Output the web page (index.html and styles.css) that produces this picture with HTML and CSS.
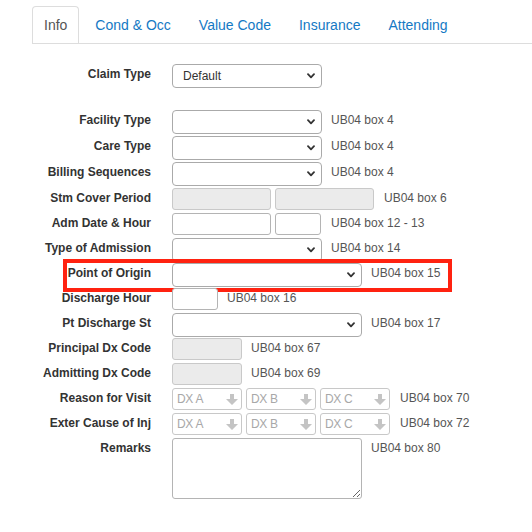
FILE: index.html
```html
<!DOCTYPE html>
<html>
<head>
<meta charset="utf-8">
<link rel="stylesheet" href="styles.css">
</head>
<body>
<ul class="tabs">
  <li class="tab active">Info</li>
  <li class="tab"><a>Cond &amp; Occ</a></li>
  <li class="tab"><a>Value Code</a></li>
  <li class="tab"><a>Insurance</a></li>
  <li class="tab"><a>Attending</a></li>
</ul>
<div class="form">
  <div class="row row-claim">
    <label class="lbl">Claim Type</label>
    <div class="sel w150"><span class="sel-text">Default</span><svg class="chev" width="8" height="6" viewBox="0 0 8 6"><path d="M1 1.2 L4 4.3 L7 1.2" /></svg></div>
  </div>
  <div class="row tall">
    <label class="lbl">Facility Type</label>
    <div class="sel w150"><span class="sel-text"></span><svg class="chev" width="8" height="6" viewBox="0 0 8 6"><path d="M1 1.2 L4 4.3 L7 1.2" /></svg></div>
    <span class="note">UB04 box 4</span>
  </div>
  <div class="row tall">
    <label class="lbl">Care Type</label>
    <div class="sel w150"><span class="sel-text"></span><svg class="chev" width="8" height="6" viewBox="0 0 8 6"><path d="M1 1.2 L4 4.3 L7 1.2" /></svg></div>
    <span class="note">UB04 box 4</span>
  </div>
  <div class="row tall">
    <label class="lbl">Billing Sequences</label>
    <div class="sel w150"><span class="sel-text"></span><svg class="chev" width="8" height="6" viewBox="0 0 8 6"><path d="M1 1.2 L4 4.3 L7 1.2" /></svg></div>
    <span class="note">UB04 box 4</span>
  </div>
  <div class="row">
    <label class="lbl">Stm Cover Period</label>
    <div class="group">
      <input class="inp w100 disabled" disabled>
      <input class="inp w100 disabled" disabled>
    </div>
    <span class="note">UB04 box 6</span>
  </div>
  <div class="row">
    <label class="lbl">Adm Date &amp; Hour</label>
    <div class="group">
      <input class="inp w100">
      <input class="inp w46">
    </div>
    <span class="note">UB04 box 12 - 13</span>
  </div>
  <div class="row">
    <label class="lbl">Type of Admission</label>
    <div class="sel w150"><span class="sel-text"></span><svg class="chev" width="8" height="6" viewBox="0 0 8 6"><path d="M1 1.2 L4 4.3 L7 1.2" /></svg></div>
    <span class="note">UB04 box 14</span>
  </div>
  <div class="row highlight">
    <label class="lbl">Point of Origin</label>
    <div class="sel w190"><span class="sel-text"></span><svg class="chev" width="8" height="6" viewBox="0 0 8 6"><path d="M1 1.2 L4 4.3 L7 1.2" /></svg></div>
    <span class="note">UB04 box 15</span>
  </div>
  <div class="row">
    <label class="lbl">Discharge Hour</label>
    <input class="inp w46">
    <span class="note">UB04 box 16</span>
  </div>
  <div class="row">
    <label class="lbl">Pt Discharge St</label>
    <div class="sel w190"><span class="sel-text"></span><svg class="chev" width="8" height="6" viewBox="0 0 8 6"><path d="M1 1.2 L4 4.3 L7 1.2" /></svg></div>
    <span class="note">UB04 box 17</span>
  </div>
  <div class="row">
    <label class="lbl">Principal Dx Code</label>
    <input class="inp w70 disabled" disabled>
    <span class="note">UB04 box 67</span>
  </div>
  <div class="row">
    <label class="lbl">Admitting Dx Code</label>
    <input class="inp w70 disabled" disabled>
    <span class="note">UB04 box 69</span>
  </div>
  <div class="row">
    <label class="lbl">Reason for Visit</label>
    <div class="group">
      <div class="dx"><span>DX A</span><svg class="darr" width="12" height="11" viewBox="0 0 12 11"><path d="M4 0 H8 V5 H12 L6 11 L0 5 H4 Z" /></svg></div>
      <div class="dx"><span>DX B</span><svg class="darr" width="12" height="11" viewBox="0 0 12 11"><path d="M4 0 H8 V5 H12 L6 11 L0 5 H4 Z" /></svg></div>
      <div class="dx"><span>DX C</span><svg class="darr" width="12" height="11" viewBox="0 0 12 11"><path d="M4 0 H8 V5 H12 L6 11 L0 5 H4 Z" /></svg></div>
    </div>
    <span class="note">UB04 box 70</span>
  </div>
  <div class="row">
    <label class="lbl">Exter Cause of Inj</label>
    <div class="group">
      <div class="dx"><span>DX A</span><svg class="darr" width="12" height="11" viewBox="0 0 12 11"><path d="M4 0 H8 V5 H12 L6 11 L0 5 H4 Z" /></svg></div>
      <div class="dx"><span>DX B</span><svg class="darr" width="12" height="11" viewBox="0 0 12 11"><path d="M4 0 H8 V5 H12 L6 11 L0 5 H4 Z" /></svg></div>
      <div class="dx"><span>DX C</span><svg class="darr" width="12" height="11" viewBox="0 0 12 11"><path d="M4 0 H8 V5 H12 L6 11 L0 5 H4 Z" /></svg></div>
    </div>
    <span class="note">UB04 box 72</span>
  </div>
  <div class="row row-remarks">
    <label class="lbl">Remarks</label>
    <textarea class="txt"></textarea>
    <span class="note">UB04 box 80</span>
  </div>
</div>
</body>
</html>
```

FILE: styles.css
```css
*, *::before, *::after { box-sizing: border-box; }
html, body {
  margin: 0;
  padding: 0;
  background: #fff;
  font-family: "Liberation Sans", Arial, Helvetica, sans-serif;
}
.tabs {
  list-style: none;
  margin: 0 0 0 32px;
  padding: 6px 0 0 0;
  display: flex;
  border-bottom: 1px solid #ddd;
}
.tab {
  font-size: 14px;
  line-height: 18px;
  padding: 9px 11px;
  margin-right: 4px;
  border: 1px solid transparent;
  border-bottom: none;
  border-radius: 4px 4px 0 0;
  color: #1479c4;
}
.tab a { color: #1479c4; }
.tab.active {
  color: #555;
  border-color: #ddd;
}
.form {
  padding: 20px 0 0 32px;
}
.row {
  display: flex;
  align-items: flex-start;
  height: 25px;
  position: relative;
}
.row.tall { height: 26px; }
.row-claim { height: 46px; }
.row-remarks { height: auto; }
.lbl {
  width: 119px;
  margin-right: 21px;
  text-align: right;
  font-size: 12px;
  line-height: 16px;
  padding-top: 2px;
  font-weight: bold;
  color: #333;
  flex-shrink: 0;
}
.note {
  font-size: 12px;
  line-height: 16px;
  padding-top: 2px;
  margin-left: 9px;
  color: #555;
  white-space: nowrap;
}
.sel {
  height: 24px;
  border: 1px solid #aaa;
  border-radius: 4px;
  background: #fff;
  display: flex;
  align-items: center;
  justify-content: space-between;
  padding: 0 6px 0 10px;
}
.sel-text {
  font-size: 12px;
  color: #333;
}
.chev path {
  fill: none;
  stroke: #333;
  stroke-width: 1.8;
  stroke-linecap: round;
  stroke-linejoin: round;
}
.w150 { width: 150px; }
.w190 { width: 190px; }
.w100 { width: 99px; }
.w70 { width: 70px; }
.w46 { width: 46px; }
.group {
  display: flex;
  gap: 4px;
}
.inp {
  height: 22px;
  margin: 0;
  border: 1px solid #b4b4b4;
  border-radius: 3px;
  background: #fff;
  padding: 0 4px;
  font-size: 12px;
  font-family: inherit;
}
.inp.disabled {
  background: #ebebeb;
  border-color: #c9c9c9;
}
.group + .note { margin-left: 10px; }
.dx {
  width: 70px;
  height: 22px;
  border: 1px solid #c8c8c8;
  border-radius: 3px;
  background: #fff;
  display: flex;
  align-items: center;
  justify-content: space-between;
  padding: 0 3px 0 4px;
  font-size: 12px;
  color: #a8a8a8;
  letter-spacing: -0.3px;
}
.darr path { fill: #c4c4c4; }
.txt {
  width: 190px;
  height: 61px;
  margin: 0;
  border: 1px solid #b4b4b4;
  border-radius: 3px;
  background: #fff;
  resize: both;
  font-family: inherit;
}
.highlight::after {
  content: "";
  position: absolute;
  left: 31px;
  top: -4px;
  width: 389px;
  height: 33px;
  border: 4px solid #ff2210;
  pointer-events: none;
}
```
